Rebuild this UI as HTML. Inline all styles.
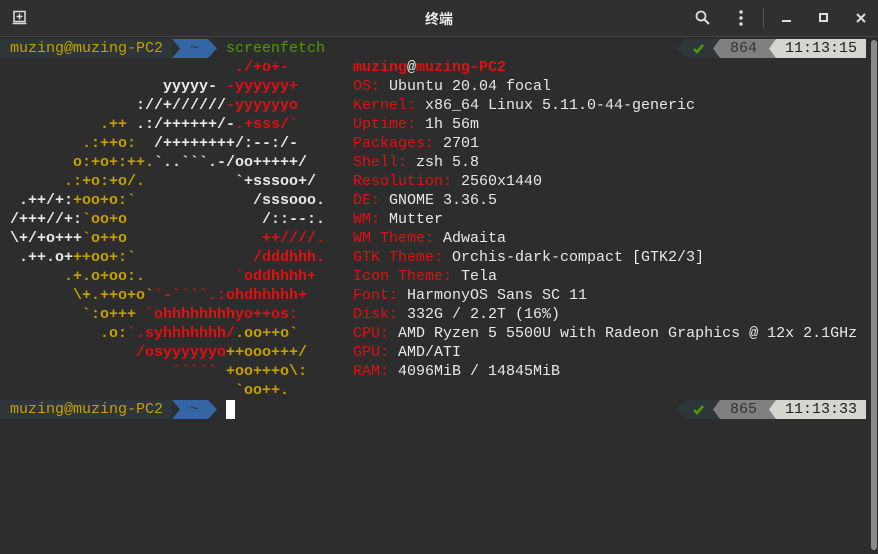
<!DOCTYPE html>
<html><head><meta charset="utf-8"><style>
html,body{margin:0;padding:0;width:878px;height:554px;overflow:hidden;background:#2d2d2d;}
#tb{position:absolute;left:0;top:0;width:878px;height:36px;background:#303030;border-bottom:1px solid #444;}
#tb .t{position:absolute;left:0;width:878px;top:9px;text-align:center;color:#eee;font:bold 14px "Liberation Sans","Noto Sans CJK SC",sans-serif;}
.mono{font-family:"Liberation Mono","DejaVu Sans Mono",monospace;font-size:15px;line-height:19px;white-space:pre;}
pre{margin:0;}
.y{color:#c4a000}.r{color:#dd1111}.w{color:#e8e8e6}.g{color:#4e9a06}
.b{font-weight:bold}
.row{position:absolute;height:19px;}
</style></head><body>
<div id="tb"><div class="t">终端</div>
<svg style="position:absolute;left:12px;top:10px" width="16" height="16" viewBox="0 0 16 16"><rect x="2" y="1.5" width="11" height="10" fill="none" stroke="#ddd" stroke-width="1.5"/><path d="M7.5 3.5v6M4.5 6.5h6M0.5 13.5h14" stroke="#ddd" stroke-width="1.5"/></svg>
<svg style="position:absolute;left:694px;top:9px" width="18" height="18" viewBox="0 0 18 18"><circle cx="7" cy="7" r="4.5" fill="none" stroke="#ddd" stroke-width="1.8"/><path d="M10.5 10.5l4.5 4.5" stroke="#ddd" stroke-width="2"/></svg>
<svg style="position:absolute;left:737px;top:9px" width="8" height="18"><circle cx="4" cy="3" r="1.7" fill="#ddd"/><circle cx="4" cy="9" r="1.7" fill="#ddd"/><circle cx="4" cy="15" r="1.7" fill="#ddd"/></svg>
<div style="position:absolute;left:763px;top:8px;width:1px;height:20px;background:#555"></div>
<div style="position:absolute;left:782px;top:20px;width:9px;height:2px;background:#ddd"></div>
<div style="position:absolute;left:819px;top:13px;width:5px;height:5px;border:2px solid #ddd"></div>
<svg style="position:absolute;left:856px;top:13px" width="10" height="10"><path d="M1 1l8 8M9 1l-8 8" stroke="#ddd" stroke-width="2"/></svg>
</div>
<div style="position:absolute;left:871px;top:40px;width:6px;height:510px;background:#8a8a8a;border-radius:3px"></div>

<div class="row mono" style="left:0;top:39px;width:172px;background:#2f3639"><span class="y" style="padding-left:10px">muzing@muzing-PC2</span></div>
<svg style="position:absolute;left:172px;top:39px" width="46" height="19"><polygon points="0,0 36,0 45,9.5 36,19 0,19 8,9.5" fill="#3465a4"/></svg>
<div class="row mono" style="left:190px;top:39px;color:#2e3436">~</div>
<div class="row mono g" style="left:226px;top:39px">screenfetch</div>
<svg style="position:absolute;left:676px;top:39px" width="190" height="19"><polygon points="10,0 44,0 44,19 10,19 0,9.5" fill="#2f3639"/><polygon points="44,0 100,0 100,19 44,19 37,9.5" fill="#808080"/><polygon points="100,0 190,0 190,19 100,19 93,9.5" fill="#d3d7cf"/><path d="M18 10l3 3 6-7" stroke="#4e9a06" stroke-width="2.5" fill="none"/></svg>
<div class="row mono" style="left:730px;top:39px;color:#333">864</div>
<div class="row mono" style="left:785px;top:39px;color:#222">11:13:15</div>

<pre class="mono b" style="position:absolute;left:1px;top:58px"><span class="r">                          ./+o+-</span>
<span class="w">                  yyyyy- </span><span class="r">-yyyyyy+</span>
<span class="w">               ://+//////</span><span class="r">-yyyyyyo</span>
<span class="y">           .++ </span><span class="w">.:/++++++/-</span><span class="r">.+sss/&#96;</span>
<span class="y">         .:++o:  </span><span class="w">/++++++++/:--:/-</span>
<span class="y">        o:+o+:++.</span><span class="w">&#96;..&#96;&#96;&#96;.-/oo+++++/</span>
<span class="y">       .:+o:+o/.</span><span class="w">          &#96;+sssoo+/</span>
<span class="w">  .++/+:</span><span class="y">+oo+o:&#96;</span><span class="w">             /sssooo.</span>
<span class="w"> /+++//+:</span><span class="y">&#96;oo+o</span><span class="w">               /::--:.</span>
<span class="w"> \+/+o+++</span><span class="y">&#96;o++o</span><span class="r">               ++////.</span>
<span class="w">  .++.o+</span><span class="y">++oo+:&#96;</span><span class="r">             /dddhhh.</span>
<span class="y">       .+.o+oo:.</span><span class="r">          &#96;oddhhhh+</span>
<span class="y">        \+.++o+o&#96;</span><span class="r">&#96;-&#96;&#96;&#96;&#96;.:ohdhhhhh+</span>
<span class="y">         &#96;:o+++ </span><span class="r">&#96;ohhhhhhhhyo++os:</span>
<span class="y">           .o:</span><span class="r">&#96;.syhhhhhhh/</span><span class="y">.oo++o&#96;</span>
<span class="r">               /osyyyyyyo</span><span class="y">++ooo+++/</span>
<span class="r">                   &#96;&#96;&#96;&#96;&#96; </span><span class="y">+oo+++o\:</span>
<span class="y">                          &#96;oo++.</span></pre>

<pre class="mono w" style="position:absolute;left:353px;top:58px"><span class="r b">muzing</span>@<span class="r b">muzing-PC2</span>
<span class="r">OS:</span> Ubuntu 20.04 focal
<span class="r">Kernel:</span> x86_64 Linux 5.11.0-44-generic
<span class="r">Uptime:</span> 1h 56m
<span class="r">Packages:</span> 2701
<span class="r">Shell:</span> zsh 5.8
<span class="r">Resolution:</span> 2560x1440
<span class="r">DE:</span> GNOME 3.36.5
<span class="r">WM:</span> Mutter
<span class="r">WM Theme:</span> Adwaita
<span class="r">GTK Theme:</span> Orchis-dark-compact [GTK2/3]
<span class="r">Icon Theme:</span> Tela
<span class="r">Font:</span> HarmonyOS Sans SC 11
<span class="r">Disk:</span> 332G / 2.2T (16%)
<span class="r">CPU:</span> AMD Ryzen 5 5500U with Radeon Graphics @ 12x 2.1GHz
<span class="r">GPU:</span> AMD/ATI
<span class="r">RAM:</span> 4096MiB / 14845MiB</pre>

<div class="row mono" style="left:0;top:400px;width:172px;background:#2f3639"><span class="y" style="padding-left:10px">muzing@muzing-PC2</span></div>
<svg style="position:absolute;left:172px;top:400px" width="46" height="19"><polygon points="0,0 36,0 45,9.5 36,19 0,19 8,9.5" fill="#3465a4"/></svg>
<div class="row mono" style="left:190px;top:400px;color:#2e3436">~</div>
<div style="position:absolute;left:226px;top:400px;width:9px;height:19px;background:#fff"></div>
<svg style="position:absolute;left:676px;top:400px" width="190" height="19"><polygon points="10,0 44,0 44,19 10,19 0,9.5" fill="#2f3639"/><polygon points="44,0 100,0 100,19 44,19 37,9.5" fill="#808080"/><polygon points="100,0 190,0 190,19 100,19 93,9.5" fill="#d3d7cf"/><path d="M18 10l3 3 6-7" stroke="#4e9a06" stroke-width="2.5" fill="none"/></svg>
<div class="row mono" style="left:730px;top:400px;color:#333">865</div>
<div class="row mono" style="left:785px;top:400px;color:#222">11:13:33</div>
</body></html>
